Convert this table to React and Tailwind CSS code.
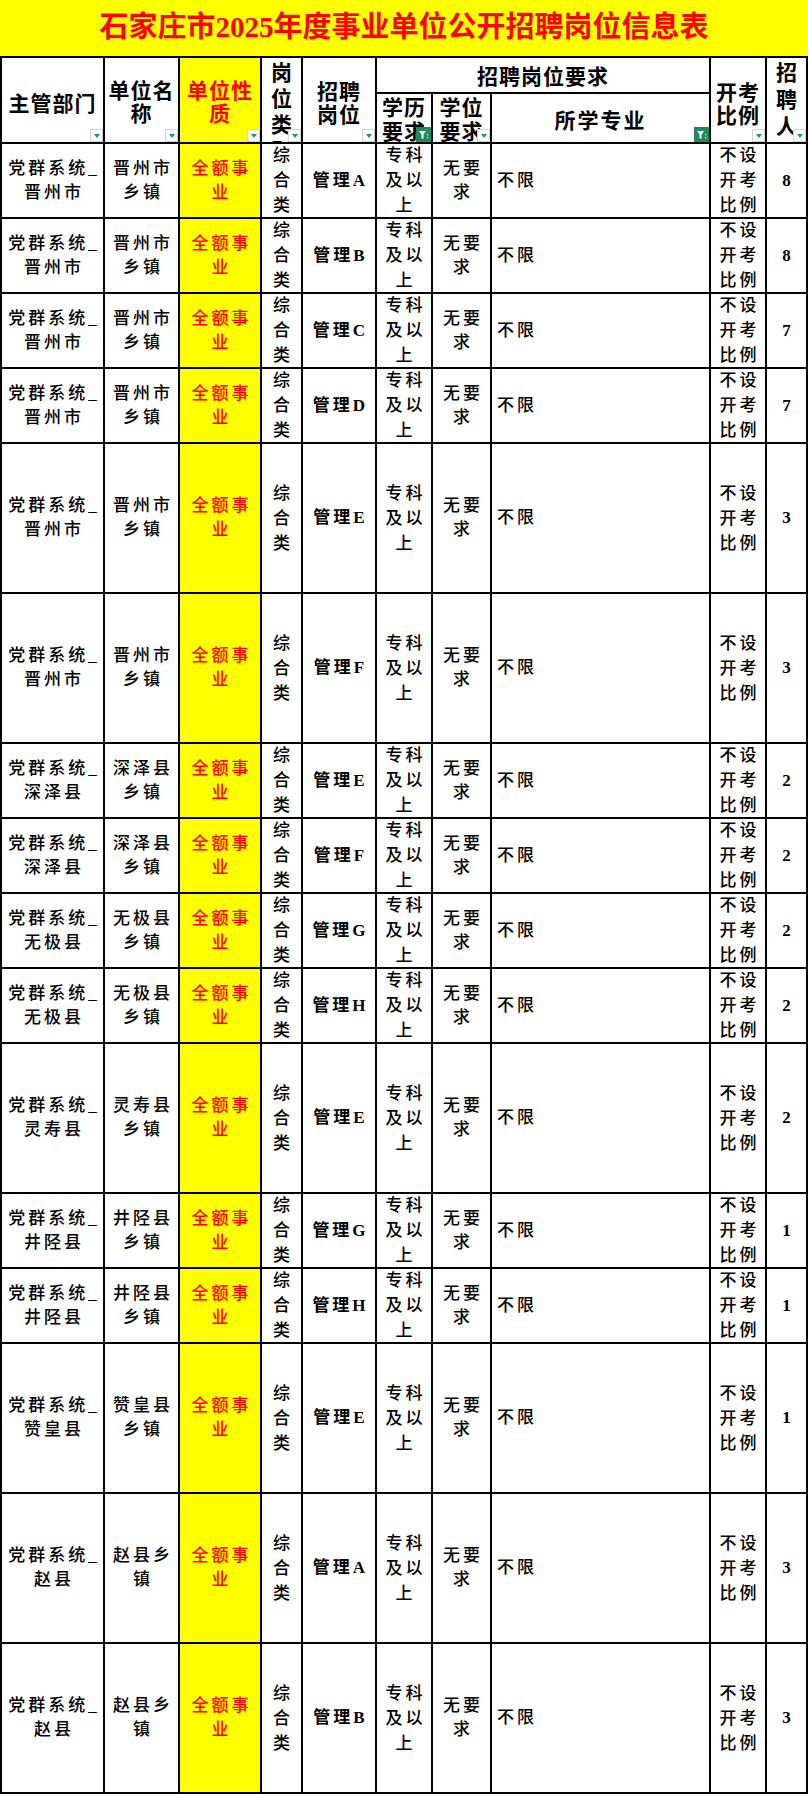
import React from "react";

const rows = [
	{ county: "晋州市", unit: ["晋州市", "乡镇"], post: "管理A", num: 8, tall: false },
	{ county: "晋州市", unit: ["晋州市", "乡镇"], post: "管理B", num: 8, tall: false },
	{ county: "晋州市", unit: ["晋州市", "乡镇"], post: "管理C", num: 7, tall: false },
	{ county: "晋州市", unit: ["晋州市", "乡镇"], post: "管理D", num: 7, tall: false },
	{ county: "晋州市", unit: ["晋州市", "乡镇"], post: "管理E", num: 3, tall: true },
	{ county: "晋州市", unit: ["晋州市", "乡镇"], post: "管理F", num: 3, tall: true },
	{ county: "深泽县", unit: ["深泽县", "乡镇"], post: "管理E", num: 2, tall: false },
	{ county: "深泽县", unit: ["深泽县", "乡镇"], post: "管理F", num: 2, tall: false },
	{ county: "无极县", unit: ["无极县", "乡镇"], post: "管理G", num: 2, tall: false },
	{ county: "无极县", unit: ["无极县", "乡镇"], post: "管理H", num: 2, tall: false },
	{ county: "灵寿县", unit: ["灵寿县", "乡镇"], post: "管理E", num: 2, tall: true },
	{ county: "井陉县", unit: ["井陉县", "乡镇"], post: "管理G", num: 1, tall: false },
	{ county: "井陉县", unit: ["井陉县", "乡镇"], post: "管理H", num: 1, tall: false },
	{ county: "赞皇县", unit: ["赞皇县", "乡镇"], post: "管理E", num: 1, tall: true },
	{ county: "赵县", unit: ["赵县乡", "镇"], post: "管理A", num: 3, tall: true },
	{ county: "赵县", unit: ["赵县乡", "镇"], post: "管理B", num: 3, tall: true },
];

const FilterBtn = ({ active }) =>
	active ? (
		<span className="absolute right-0 bottom-0 w-[15px] h-[15px] bg-[#1f8a60] flex items-center justify-center">
			<svg width="11" height="11" viewBox="0 0 11 11">
				<path d="M1 2h7L5.5 5.5V10L3.5 9V5.5z" fill="#fff" />
				<rect x="9" y="5" width="1.2" height="1.2" fill="#fff" />
				<rect x="9" y="8" width="1.2" height="1.2" fill="#fff" />
			</svg>
		</span>
	) : (
		<span className="absolute right-0 bottom-0 w-[13px] h-[13px] border border-[#d4d4d4] bg-white flex items-center justify-center">
			<span className="w-0 h-0 border-l-[3.5px] border-r-[3.5px] border-t-[4px] border-l-transparent border-r-transparent border-t-[#1f9068]" />
		</span>
	);

const HeadCell = ({ lines, className = "", lead = "leading-[23px]", bg = "bg-white", filter, active }) => (
	<div className={`relative ${bg} ${lead} flex flex-col items-center overflow-hidden text-center ${className}`}>
		{lines.map((l) => (
			<div key={l} className="whitespace-nowrap">
				{l}
			</div>
		))}
		{filter && <FilterBtn active={active} />}
	</div>
);

const Cell = ({ h, lines, bg = "bg-white", weight = "font-medium", lead = "leading-[24px]", className = "" }) => (
	<div
		className={`${h} ${bg} ${weight} ${lead} flex flex-col justify-center overflow-hidden text-[17px] ${className}`}
	>
		{lines.map((l, i) => (
			<div key={i} className="whitespace-nowrap">
				{l}
			</div>
		))}
	</div>
);

export default function App() {
	return (
		<div className="w-[808px] bg-white text-black font-['Liberation_Serif','Noto_Sans_CJK_SC',serif]">
			<div className="h-[56px] bg-[#ffff00] flex items-center justify-center">
				<h1 className="text-[#ff0000] text-[29px] font-bold">
					石家庄市2025年度事业单位公开招聘岗位信息表
				</h1>
			</div>
			<div className="grid grid-cols-[101px_73px_80px_39px_72px_54px_57px_217px_54px_39px] grid-rows-[34px_48px] gap-[2px] bg-black p-[2px]">
				{/* header */}
				<div className="contents font-['Noto_Sans_CJK_SC',sans-serif] font-bold text-[21px]">
					<HeadCell className="row-span-2 justify-center pt-[4px] tracking-[1px]" lines={["主管部门"]} filter />
					<HeadCell className="row-span-2 justify-center pt-[2px] tracking-[1px]" lines={["单位名", "称"]} filter />
					<HeadCell
						className="row-span-2 justify-center pt-[2px] tracking-[1px] text-[#ff0000]"
						bg="bg-[#ffff00]"
						lines={["单位性", "质"]}
						filter
					/>
					<HeadCell className="row-span-2 justify-start" lead="leading-[26px]" lines={["岗", "位", "类", "别"]} filter />
					<HeadCell className="row-span-2 justify-center pt-[4px] tracking-[1px]" lines={["招聘", "岗位"]} filter />
					<HeadCell className="col-span-3 justify-center tracking-[1px]" lines={["招聘岗位要求"]} />
					<HeadCell className="row-span-2 justify-center pt-[6px] tracking-[1px]" lines={["开考", "比例"]} filter />
					<HeadCell className="row-span-2 justify-start" lead="leading-[27px]" lines={["招", "聘", "人", "数"]} filter />
					<HeadCell className="justify-center tracking-[1px]" lead="leading-[24px]" lines={["学历", "要求"]} filter active />
					<HeadCell className="justify-center tracking-[1px]" lead="leading-[24px]" lines={["学位", "要求"]} filter />
					<HeadCell className="justify-center pt-[2px] tracking-[2px]" lines={["所学专业"]} filter active />
				</div>

				{/* body */}
				{rows.map((r, i) => {
					const h = r.tall ? "h-[148px]" : "h-[73px]";
					return (
						<React.Fragment key={i}>
							<Cell h={h} className="items-center pl-[3px] tracking-[3px]" lines={["党群系统_", r.county]} />
							<Cell h={h} className="items-center pl-[3px] tracking-[3px]" lines={r.unit} />
							<Cell
								h={h}
								bg="bg-[#ffff00]"
								className="items-center pl-[3px] tracking-[3px] text-[#ff0000]"
								lines={["全额事", "业"]}
							/>
							<Cell h={h} lead="leading-[25px]" className="items-center pl-[3px] tracking-[3px]" lines={["综", "合", "类"]} />
							<Cell h={h} weight="font-semibold" className="items-center pl-[3px] tracking-[3px]" lines={[r.post]} />
							<Cell h={h} lead="leading-[25px]" className="items-center pl-[3px] tracking-[3px]" lines={["专科", "及以", "上"]} />
							<Cell h={h} className="items-center pl-[3px] tracking-[3px]" lines={["无要", "求"]} />
							<Cell h={h} className="items-start pl-[5px] tracking-[3px]" lines={["不限"]} />
							<Cell h={h} lead="leading-[25px]" className="items-center pl-[3px] tracking-[3px]" lines={["不设", "开考", "比例"]} />
							<Cell h={h} weight="font-bold" className="items-center" lines={[String(r.num)]} />
						</React.Fragment>
					);
				})}
			</div>
		</div>
	);
}
